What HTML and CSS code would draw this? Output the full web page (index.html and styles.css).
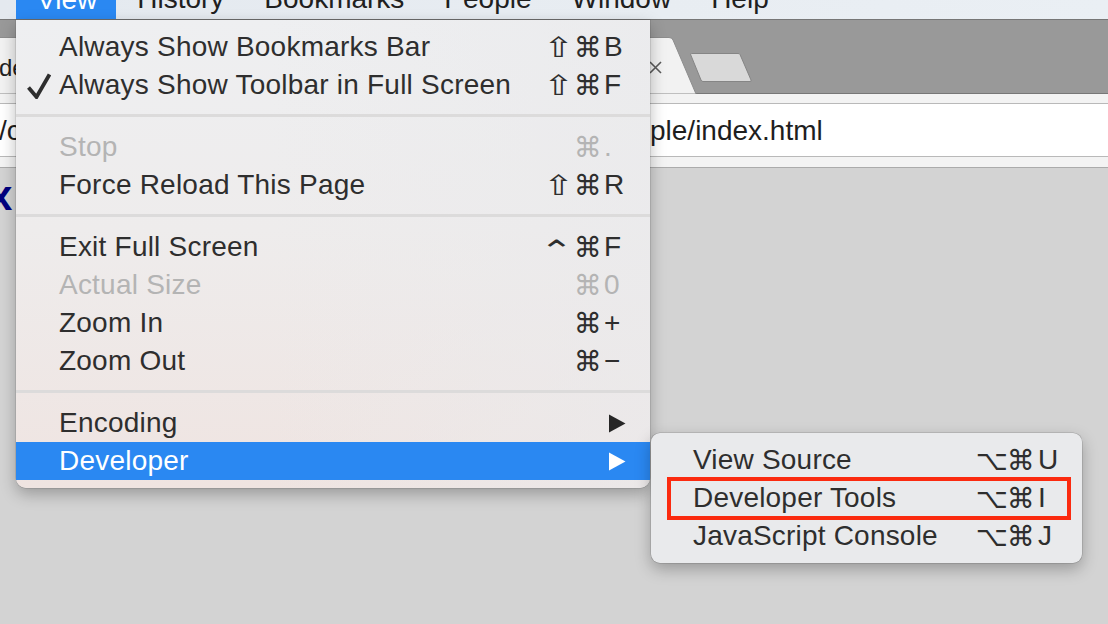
FILE: index.html
```html
<!DOCTYPE html>
<html>
<head>
<meta charset="utf-8">
<title>View menu</title>
<link rel="stylesheet" href="styles.css">
</head>
<body>
<div class="menubar">
  <span class="mb-item active">View</span>
  <span class="mb-item">History</span>
  <span class="mb-item">Bookmarks</span>
  <span class="mb-item">People</span>
  <span class="mb-item">Window</span>
  <span class="mb-item">Help</span>
</div>

<div class="tabstrip">
  <div class="tab">
    <svg class="tab-shape" width="700" height="57" viewBox="0 0 700 57"><path d="M-4 57 L-4 0.5 L669 0.5 Q672 0.5 673 3 L696 57 Z" fill="#f2f2f2" stroke="#8d8d8d" stroke-width="1"/></svg>
    <span class="tab-title">de</span>
    <svg class="tab-close" width="13" height="13" viewBox="0 0 13 13"><path d="M1 1 L12 12 M12 1 L1 12" stroke="#5a5a5a" stroke-width="1.6" fill="none"/></svg>
  </div>
  <svg class="newtab" width="66" height="32" viewBox="0 0 66 32"><path d="M3.5 2.5 Q2 2.5 2.8 4 L13 29 Q13.5 30.5 15 30.5 L62 30.5 Q63.8 30.5 63 29 L52 3.5 Q51.5 2.5 50 2.5 Z" fill="#d9d9d9" stroke="#858585" stroke-width="1"/></svg>
</div>

<div class="toolbar">
  <div class="omnibox"><span class="url-a">/c</span><span class="url-b">ple/index.html</span></div>
</div>

<div class="content"><span class="big-x">x</span></div>

<div class="menu">
  <div class="item"><span class="chk"></span><span class="label">Always Show Bookmarks Bar</span><span class="sc"><span class="mods"><span class="shift">⇧</span>⌘</span><span class="key">B</span></span></div>
  <div class="item"><span class="chk"><svg width="24" height="26" viewBox="0 0 24 26"><path d="M1.5 14.5 L9.5 24 L22.5 1.5" fill="none" stroke="#2e2e2e" stroke-width="3.8" stroke-linejoin="miter"/></svg></span><span class="label">Always Show Toolbar in Full Screen</span><span class="sc"><span class="mods"><span class="shift">⇧</span>⌘</span><span class="key">F</span></span></div>
  <div class="sep"></div>
  <div class="item disabled"><span class="chk"></span><span class="label">Stop</span><span class="sc"><span class="mods">⌘</span><span class="key">.</span></span></div>
  <div class="item"><span class="chk"></span><span class="label">Force Reload This Page</span><span class="sc"><span class="mods"><span class="shift">⇧</span>⌘</span><span class="key">R</span></span></div>
  <div class="sep"></div>
  <div class="item"><span class="chk"></span><span class="label">Exit Full Screen</span><span class="sc"><span class="mods"><span class="ctrl">⌃</span>⌘</span><span class="key">F</span></span></div>
  <div class="item disabled"><span class="chk"></span><span class="label">Actual Size</span><span class="sc"><span class="mods">⌘</span><span class="key">0</span></span></div>
  <div class="item"><span class="chk"></span><span class="label">Zoom In</span><span class="sc"><span class="mods">⌘</span><span class="key">+</span></span></div>
  <div class="item"><span class="chk"></span><span class="label">Zoom Out</span><span class="sc"><span class="mods">⌘</span><span class="key">−</span></span></div>
  <div class="sep"></div>
  <div class="item"><span class="chk"></span><span class="label">Encoding</span><svg class="arrow" width="18" height="19" viewBox="0 0 18 19"><path d="M1 0.5 L17.5 9.5 L1 18.5 Z" fill="#262626"/></svg></div>
  <div class="item hl"><span class="chk"></span><span class="label">Developer</span><svg class="arrow" width="18" height="19" viewBox="0 0 18 19"><path d="M1 0.5 L17.5 9.5 L1 18.5 Z" fill="#ffffff"/></svg></div>
</div>

<div class="submenu">
  <div class="sitem"><span class="label">View Source</span><span class="sc"><span class="mods">⌥⌘</span><span class="key">U</span></span></div>
  <div class="sitem"><span class="label">Developer Tools</span><span class="sc"><span class="mods">⌥⌘</span><span class="key">I</span></span></div>
  <div class="sitem"><span class="label">JavaScript Console</span><span class="sc"><span class="mods">⌥⌘</span><span class="key">J</span></span></div>
  <div class="redbox"></div>
</div>
</body>
</html>
```

FILE: styles.css
```css
html, body {
  margin: 0;
  padding: 0;
}
body {
  width: 1108px;
  height: 624px;
  overflow: hidden;
  background: #d3d3d3;
  font-family: "Liberation Sans", "DejaVu Sans", sans-serif;
  color: #2e2e2e;
  position: relative;
}

/* ---------- menubar ---------- */
.menubar {
  height: 19px;
  border-bottom: 1px solid #767676;
  background: linear-gradient(to right, #e4e9ef, #e8edf2 60%, #eaeff4);
  display: flex;
  padding-left: 16px;
  overflow: hidden;
}
.mb-item {
  font-size: 28px;
  line-height: 19px;
  margin-top: -11px;
  height: 30px;
  padding: 0 19px 0 21px;
  color: #202020;
  white-space: nowrap;
}
.mb-item.active {
  background: #2a88f2;
  color: #ffffff;
  margin-top: 0;
  height: 19px;
  line-height: 0;
}

/* ---------- tab strip ---------- */
.tabstrip {
  height: 74px;
  background: #999999;
  box-shadow: inset 0 -1px #777777;
  display: flex;
  align-items: flex-end;
}
.tab {
  position: relative;
  width: 700px;
  height: 57px;
  flex: none;
  display: flex;
  align-items: center;
  padding-top: 4px;
  box-sizing: border-box;
}
.tab-shape {
  position: absolute;
  left: 0;
  top: 0;
}
.tab-title {
  position: relative;
  font-size: 24px;
  color: #222;
  margin-left: -1px;
}
.tab-close {
  position: relative;
  margin-left: auto;
  margin-right: 38px;
}
.newtab {
  flex: none;
  align-self: flex-start;
  margin-top: 31px;
  margin-left: -12px;
}

/* ---------- toolbar ---------- */
.toolbar {
  background: #f3f3f3;
  padding: 9px 0 10px;
  border-bottom: 1px solid #ababab;
}
.omnibox {
  height: 50px;
  background: #ffffff;
  border-top: 1px solid #b9b9b9;
  border-bottom: 1px solid #b9b9b9;
  font-size: 28px;
  line-height: 50px;
  padding-top: 2px;
  color: #1e1e1e;
  white-space: nowrap;
  display: flex;
}
.url-a {
  display: inline-block;
  width: 21px;
  flex: none;
  margin-left: -1px;
}
.url-b {
  margin-left: 630px;
}

/* ---------- content ---------- */
.content {
  height: 456px;
  background: #d3d3d3;
  overflow: hidden;
}
.big-x {
  display: block;
  font-size: 42px;
  font-weight: bold;
  color: #00007f;
  line-height: 48px;
  margin-left: -11px;
  margin-top: 4px;
}

/* ---------- main menu ---------- */
.menu {
  position: absolute;
  left: 16px;
  top: 20px;
  width: 634px;
  padding: 8px 0;
  background:
    linear-gradient(to right, rgba(236,236,238,0) 40%, rgba(234,234,236,0.7) 100%),
    linear-gradient(to bottom, #eeeff1 0%, #eeecec 45%, #efe4e1 100%);
  border-radius: 0 0 10px 10px;
  box-shadow: 0 6px 16px rgba(0,0,0,0.28), 0 0 0 0.5px rgba(0,0,0,0.18);
}
.item {
  display: flex;
  align-items: center;
  height: 38px;
  padding: 0 24px 0 11px;
  box-sizing: border-box;
  font-size: 28px;
  color: #2e2e2e;
  white-space: nowrap;
}
.item.disabled {
  color: #b4b4b4;
}
.item.hl {
  background: #2a88f2;
  color: #ffffff;
}
.chk {
  width: 32px;
  flex: none;
  display: flex;
  align-items: center;
  padding-top: 2px;
}
.label {
  flex: 1;
  letter-spacing: 0.22px;
}
.sc {
  display: flex;
  flex: none;
}
.mods {
  text-align: right;
  letter-spacing: 1px;
}
.shift {
  display: inline-block;
  transform: scaleX(1.3);
  margin-right: 3px;
}
.ctrl {
  display: inline-block;
  font-weight: normal;
  transform: translateY(4px) scale(1.45, 1.05);
  margin-right: 5px;
}
.key {
  width: 22px;
  padding-left: 1px;
}
.arrow {
  flex: none;
}
.sep {
  height: 3px;
  margin: 10px 0 11px;
  background: #dcdbdb;
}

/* ---------- submenu ---------- */
.submenu {
  position: absolute;
  left: 651px;
  top: 433px;
  width: 431px;
  padding: 8px 0;
  box-sizing: border-box;
  background: #e9eaec;
  border-radius: 9px;
  box-shadow: 0 6px 16px rgba(0,0,0,0.28), 0 0 0 0.5px rgba(0,0,0,0.2);
}
.sitem {
  display: flex;
  align-items: center;
  height: 38px;
  padding: 0 22px 0 42px;
  box-sizing: border-box;
  font-size: 28px;
  color: #2e2e2e;
  white-space: nowrap;
}
.sitem .label {
  letter-spacing: 0.2px;
}
.sitem .mods {
  letter-spacing: -1px;
}
.sitem .key {
  padding-left: 4px;
}
.redbox {
  position: absolute;
  left: 16px;
  top: 44px;
  width: 404px;
  height: 43px;
  box-sizing: border-box;
  border: 4px solid #fb2a0f;
}
```
